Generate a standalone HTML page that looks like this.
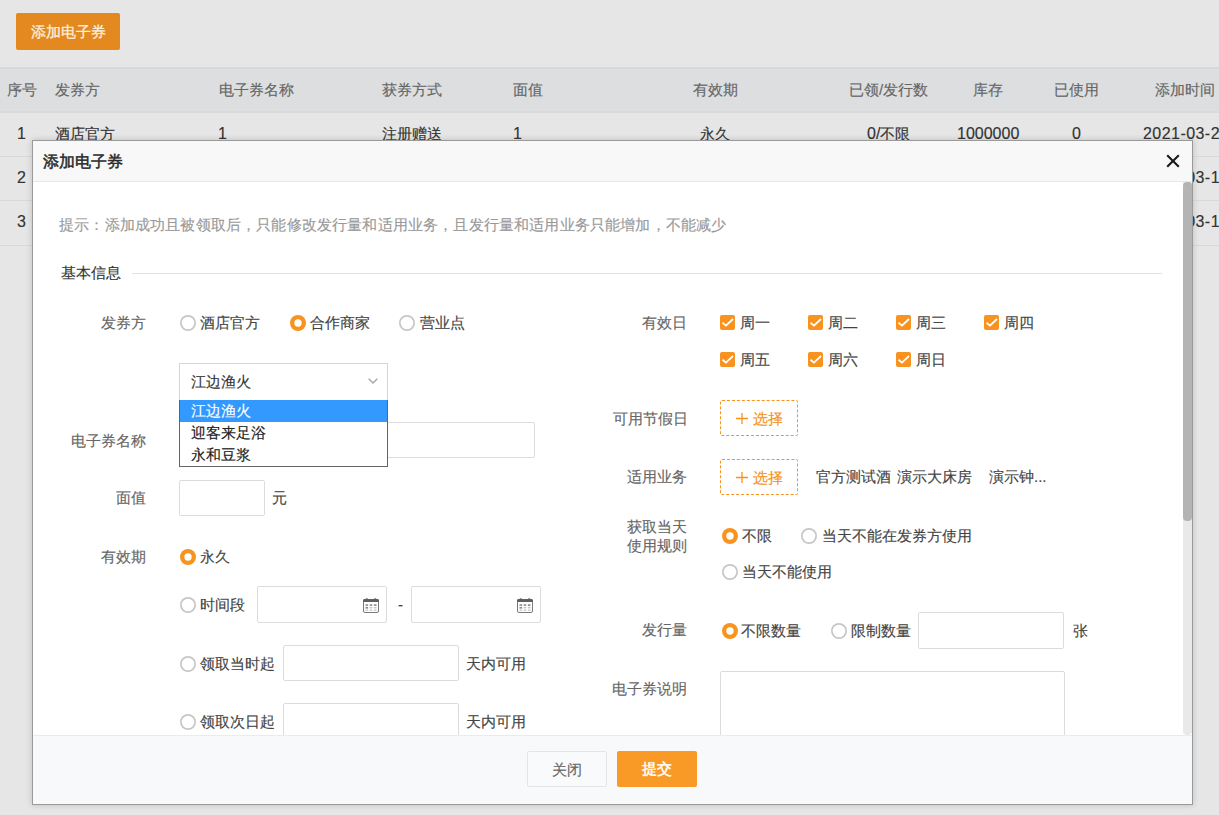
<!DOCTYPE html>
<html><head><meta charset="utf-8">
<style>
*{box-sizing:border-box;margin:0;padding:0}
html,body{width:1219px;height:815px;overflow:hidden;background:#e6e6e6;font-family:"Liberation Sans",sans-serif;font-size:15px;color:#333}
.abs{position:absolute}
.t{position:absolute;white-space:nowrap;line-height:20px;-webkit-text-stroke:0.15px currentColor}
#topbtn{left:16px;top:13px;width:104px;height:37px;background:#e3891f;border-radius:2px;color:#fdeedb;font-size:15px;line-height:38px;text-align:center;-webkit-text-stroke:0.3px #fdeedb}
#thead{left:0;top:67px;width:1219px;height:46px;background:#dcdee0;border-top:2px solid #d6d8da;border-bottom:2px solid #d8dadc}
.row{position:absolute;left:0;width:1219px;height:44px;border-bottom:1px solid #d6d6d6}
.th{color:#666}
.td{color:#333}
.dg{font-size:16px}
#modal{left:32px;top:140px;width:1161px;height:665px;background:#fff;border:1px solid #9a9a9a;box-shadow:0 0 6px rgba(0,0,0,.18)}
#mhead{left:0;top:0;width:1159px;height:41px;background:#f8f8f8;border-bottom:1px solid #e8e8e8}
#mfoot{left:0;top:594px;width:1159px;height:69px;background:#f7f9fa;border-top:1px solid #e6ecef}
.btn{position:absolute;height:36px;line-height:36px;text-align:center;font-size:15px;border-radius:2px}
#clip{position:absolute;left:0;top:0;width:1219px;height:815px;clip-path:inset(182px 27px 80px 33px)}
.lbl{color:#666}
.opt{color:#444}
.inp{position:absolute;border:1px solid #dcdcdc;background:#fff;border-radius:2px}
.radio{position:absolute;width:16px;height:16px;border-radius:50%;background:#fff;box-shadow:inset 0 0 0 1.7px #c6c6c6}
.radio.on{box-shadow:inset 0 0 0 4.3px #f7931e}
.chk{position:absolute;width:15px;height:15px;background:#f7931e;border-radius:2px}
.chk svg{position:absolute;left:0;top:0}
.dash{position:absolute;width:78px;height:36px;border:1px dashed #f7931e;color:#f7931e;border-radius:2px}
.cal{position:absolute;width:16px;height:16px}
</style></head><body>
<div id="topbtn" class="abs">添加电子券</div>
<div id="thead" class="abs"></div>
<div class="t th" style="left:7px;top:80px">序号</div>
<div class="t th" style="left:55px;top:80px">发券方</div>
<div class="t th" style="left:219px;top:80px">电子券名称</div>
<div class="t th" style="left:382px;top:80px">获券方式</div>
<div class="t th" style="left:513px;top:80px">面值</div>
<div class="t th" style="left:693px;top:80px">有效期</div>
<div class="t th" style="left:849px;top:80px">已领/发行数</div>
<div class="t th" style="left:973px;top:80px">库存</div>
<div class="t th" style="left:1054px;top:80px">已使用</div>
<div class="t th" style="left:1155px;top:80px">添加时间</div>
<div class="abs" style="left:0;top:156px;width:1219px;height:1px;background:#d9d9d9"></div>
<div class="abs" style="left:0;top:200px;width:1219px;height:1px;background:#d9d9d9"></div>
<div class="abs" style="left:0;top:245px;width:1219px;height:1px;background:#d9d9d9"></div>
<div class="t td dg" style="left:17px;top:124px">1</div>
<div class="t td" style="left:55px;top:124px">酒店官方</div>
<div class="t td dg" style="left:218px;top:124px">1</div>
<div class="t td" style="left:382px;top:124px">注册赠送</div>
<div class="t td dg" style="left:513px;top:124px">1</div>
<div class="t td" style="left:700px;top:124px">永久</div>
<div class="t td" style="left:867px;top:124px"><span class="dg">0/</span>不限</div>
<div class="t td" style="left:957px;top:124px"><span class="dg">1000000</span></div>
<div class="t td" style="left:1072px;top:124px"><span class="dg">0</span></div>
<div class="t td" style="left:1143px;top:124px"><span class="dg" style="letter-spacing:0.45px">2021-03-2</span></div>
<div class="t td dg" style="left:17px;top:168px">2</div>
<div class="t td" style="left:1143px;top:168px"><span class="dg" style="letter-spacing:0.45px">2021-03-1</span></div>
<div class="t td dg" style="left:17px;top:212px">3</div>
<div class="t td" style="left:1143px;top:212px"><span class="dg" style="letter-spacing:0.45px">2021-03-1</span></div>

<div id="modal" class="abs">
  <div id="mhead" class="abs"></div>
  <div class="t" style="left:10px;top:11px;font-size:16px;color:#2a2a2a;-webkit-text-stroke:0.5px #2a2a2a">添加电子券</div>
  <svg class="abs" style="left:1133px;top:13px" width="14" height="14" viewBox="0 0 14 14"><path d="M1.2 1.2 L12.8 12.8 M12.8 1.2 L1.2 12.8" stroke="#1a1a1a" stroke-width="2.1"/></svg>
  <div class="abs" style="left:1150px;top:41px;width:9px;height:553px;background:#e9e9e9;border-radius:0 0 4px 4px"></div>
  <div class="abs" style="left:1150px;top:41px;width:9px;height:339px;background:#b4b4b4;border-radius:4px"></div>
  <div id="mfoot" class="abs"></div>
  <div class="btn" style="left:494px;top:610px;width:80px;background:#f9fafb;border:1px solid #e3e5e7;color:#666;-webkit-text-stroke:0.15px #666">关闭</div>
  <div class="btn" style="left:584px;top:610px;width:80px;background:#f99a26;color:#fff;-webkit-text-stroke:0.45px #fff">提交</div>
</div>

<div id="clip">
  <div class="t" style="left:59px;top:215px;color:#999;letter-spacing:0.17px">提示：添加成功且被领取后，只能修改发行量和适用业务，且发行量和适用业务只能增加，不能减少</div>
  <div class="t" style="left:61px;top:263px;color:#333">基本信息</div>
  <div class="abs" style="left:132px;top:273px;width:1030px;height:1px;background:#e2e2e2"></div>

  <!-- left column -->
  <div class="t lbl" style="left:101px;top:313px">发券方</div>
  <div class="radio" style="left:180px;top:315px"></div>
  <div class="t opt" style="left:200px;top:313px">酒店官方</div>
  <div class="radio on" style="left:290px;top:315px"></div>
  <div class="t opt" style="left:310px;top:313px">合作商家</div>
  <div class="radio" style="left:399px;top:315px"></div>
  <div class="t opt" style="left:420px;top:313px">营业点</div>

  <div class="t lbl" style="left:71px;top:431px">电子券名称</div>
  <div class="inp" style="left:179px;top:422px;width:356px;height:36px"></div>

  <div class="inp" style="left:179px;top:363px;width:209px;height:38px;border-color:#d6d6d6;border-radius:0"></div>
  <div class="t opt" style="left:191px;top:372px;color:#333">江边渔火</div>
  <svg class="abs" style="left:368px;top:378px" width="10" height="6" viewBox="0 0 10 6"><path d="M0.7 0.7 L5 5 L9.3 0.7" fill="none" stroke="#a6a6a6" stroke-width="1.4"/></svg>
  <div class="abs" style="left:179px;top:400px;width:209px;height:67px;border:1px solid #646464;border-top:0;background:#fff"></div>
  <div class="abs" style="left:180px;top:400px;width:207px;height:22px;background:#3399ff"></div>
  <div class="t" style="left:191px;top:401px;color:#fff">江边渔火</div>
  <div class="t" style="left:191px;top:423px;color:#222">迎客来足浴</div>
  <div class="t" style="left:191px;top:445px;color:#222">永和豆浆</div>

  <div class="t lbl" style="left:116px;top:488px">面值</div>
  <div class="inp" style="left:179px;top:480px;width:86px;height:36px"></div>
  <div class="t opt" style="left:272px;top:488px">元</div>

  <div class="t lbl" style="left:101px;top:547px">有效期</div>
  <div class="radio on" style="left:180px;top:549px"></div>
  <div class="t opt" style="left:200px;top:547px">永久</div>

  <div class="radio" style="left:180px;top:597px"></div>
  <div class="t opt" style="left:200px;top:595px">时间段</div>
  <div class="inp" style="left:257px;top:586px;width:130px;height:37px"></div>
  <div class="t opt" style="left:398px;top:595px">-</div>
  <div class="inp" style="left:411px;top:586px;width:130px;height:37px"></div>
  <div class="cal" style="left:363px;top:597px"><svg width="16" height="16" viewBox="0 0 16 16"><rect x="0.5" y="2.5" width="15" height="13" rx="1.5" fill="#fff" stroke="#7a7a7a"/><rect x="0" y="2.3" width="16" height="2.7" rx="1" fill="#5e5e5e"/><path d="M2 2.6 Q3.8 -0.2 5.6 2.6 Z M10.4 2.6 Q12.2 -0.2 14 2.6 Z" fill="#5e5e5e"/><g fill="#8c8c8c"><rect x="2.5" y="7.3" width="2.6" height="1.6"/><rect x="6.7" y="7.3" width="2.6" height="1.6"/><rect x="10.9" y="7.3" width="2.6" height="1.6"/><rect x="2.5" y="10" width="2.6" height="1.6"/></g><g fill="#c4c4c4"><rect x="6.7" y="10" width="2.6" height="1.4"/><rect x="10.9" y="10" width="2.6" height="1.4"/><rect x="2.5" y="12.6" width="2.6" height="1.2"/><rect x="6.7" y="12.6" width="2.6" height="1.2"/><rect x="10.9" y="12.6" width="2.6" height="1.2"/></g></svg></div>
  <div class="cal" style="left:517px;top:597px"><svg width="16" height="16" viewBox="0 0 16 16"><rect x="0.5" y="2.5" width="15" height="13" rx="1.5" fill="#fff" stroke="#7a7a7a"/><rect x="0" y="2.3" width="16" height="2.7" rx="1" fill="#5e5e5e"/><path d="M2 2.6 Q3.8 -0.2 5.6 2.6 Z M10.4 2.6 Q12.2 -0.2 14 2.6 Z" fill="#5e5e5e"/><g fill="#8c8c8c"><rect x="2.5" y="7.3" width="2.6" height="1.6"/><rect x="6.7" y="7.3" width="2.6" height="1.6"/><rect x="10.9" y="7.3" width="2.6" height="1.6"/><rect x="2.5" y="10" width="2.6" height="1.6"/></g><g fill="#c4c4c4"><rect x="6.7" y="10" width="2.6" height="1.4"/><rect x="10.9" y="10" width="2.6" height="1.4"/><rect x="2.5" y="12.6" width="2.6" height="1.2"/><rect x="6.7" y="12.6" width="2.6" height="1.2"/><rect x="10.9" y="12.6" width="2.6" height="1.2"/></g></svg></div>

  <div class="radio" style="left:180px;top:656px"></div>
  <div class="t opt" style="left:200px;top:654px">领取当时起</div>
  <div class="inp" style="left:283px;top:645px;width:176px;height:36px"></div>
  <div class="t opt" style="left:466px;top:654px">天内可用</div>

  <div class="radio" style="left:180px;top:714px"></div>
  <div class="t opt" style="left:200px;top:712px">领取次日起</div>
  <div class="inp" style="left:283px;top:703px;width:176px;height:36px"></div>
  <div class="t opt" style="left:466px;top:712px">天内可用</div>

  <!-- right column -->
  <div class="t lbl" style="left:642px;top:313px">有效日</div>
  <div class="t lbl" style="left:613px;top:409px">可用节假日</div>
  <div class="t lbl" style="left:627px;top:467px">适用业务</div>
  <div class="t lbl" style="left:627px;top:517px">获取当天</div>
  <div class="t lbl" style="left:627px;top:536px">使用规则</div>
  <div class="t lbl" style="left:642px;top:620px">发行量</div>
  <div class="t lbl" style="left:612px;top:679px">电子券说明</div>

  <div class="dash" style="left:720px;top:400px"></div>
  <svg class="abs" style="left:736px;top:413px" width="12" height="11" viewBox="0 0 12 11"><path d="M0 5.5 H12 M6 0 V11" stroke="#f7931e" stroke-width="1.3"/></svg><div class="t" style="left:753px;top:409px;color:#f7931e">选择</div>
  <div class="dash" style="left:720px;top:459px"></div>
  <svg class="abs" style="left:736px;top:472px" width="12" height="11" viewBox="0 0 12 11"><path d="M0 5.5 H12 M6 0 V11" stroke="#f7931e" stroke-width="1.3"/></svg><div class="t" style="left:753px;top:468px;color:#f7931e">选择</div>
  <div class="t opt" style="left:816px;top:467px">官方测试酒</div><div class="t opt" style="left:897px;top:467px">演示大床房</div><div class="t opt" style="left:989px;top:467px">演示钟...</div>

  <div class="radio on" style="left:722px;top:528px"></div>
  <div class="t opt" style="left:742px;top:526px">不限</div>
  <div class="radio" style="left:801px;top:528px"></div>
  <div class="t opt" style="left:822px;top:526px">当天不能在发券方使用</div>
  <div class="radio" style="left:722px;top:564px"></div>
  <div class="t opt" style="left:742px;top:562px">当天不能使用</div>

  <div class="radio on" style="left:722px;top:623px"></div>
  <div class="t opt" style="left:741px;top:621px">不限数量</div>
  <div class="radio" style="left:831px;top:623px"></div>
  <div class="t opt" style="left:851px;top:621px">限制数量</div>
  <div class="inp" style="left:918px;top:612px;width:146px;height:37px"></div>
  <div class="t opt" style="left:1073px;top:621px">张</div>

  <div class="inp" style="left:720px;top:671px;width:345px;height:80px"></div>
</div>
<div style="position:absolute;left:0;top:0;width:1219px;height:815px;clip-path:inset(182px 27px 80px 33px)"><div class="chk" style="left:720px;top:315px"><svg width="15" height="15" viewBox="0 0 15 15"><path d="M2.5 7.8 L6 10.6 L13 4" fill="none" stroke="#fff" stroke-width="1.8"/></svg></div><div class="t opt" style="left:740px;top:313px">周一</div>
<div class="chk" style="left:808px;top:315px"><svg width="15" height="15" viewBox="0 0 15 15"><path d="M2.5 7.8 L6 10.6 L13 4" fill="none" stroke="#fff" stroke-width="1.8"/></svg></div><div class="t opt" style="left:828px;top:313px">周二</div>
<div class="chk" style="left:896px;top:315px"><svg width="15" height="15" viewBox="0 0 15 15"><path d="M2.5 7.8 L6 10.6 L13 4" fill="none" stroke="#fff" stroke-width="1.8"/></svg></div><div class="t opt" style="left:916px;top:313px">周三</div>
<div class="chk" style="left:984px;top:315px"><svg width="15" height="15" viewBox="0 0 15 15"><path d="M2.5 7.8 L6 10.6 L13 4" fill="none" stroke="#fff" stroke-width="1.8"/></svg></div><div class="t opt" style="left:1004px;top:313px">周四</div>
<div class="chk" style="left:720px;top:352px"><svg width="15" height="15" viewBox="0 0 15 15"><path d="M2.5 7.8 L6 10.6 L13 4" fill="none" stroke="#fff" stroke-width="1.8"/></svg></div><div class="t opt" style="left:740px;top:350px">周五</div>
<div class="chk" style="left:808px;top:352px"><svg width="15" height="15" viewBox="0 0 15 15"><path d="M2.5 7.8 L6 10.6 L13 4" fill="none" stroke="#fff" stroke-width="1.8"/></svg></div><div class="t opt" style="left:828px;top:350px">周六</div>
<div class="chk" style="left:896px;top:352px"><svg width="15" height="15" viewBox="0 0 15 15"><path d="M2.5 7.8 L6 10.6 L13 4" fill="none" stroke="#fff" stroke-width="1.8"/></svg></div><div class="t opt" style="left:916px;top:350px">周日</div></div>
</body></html>
